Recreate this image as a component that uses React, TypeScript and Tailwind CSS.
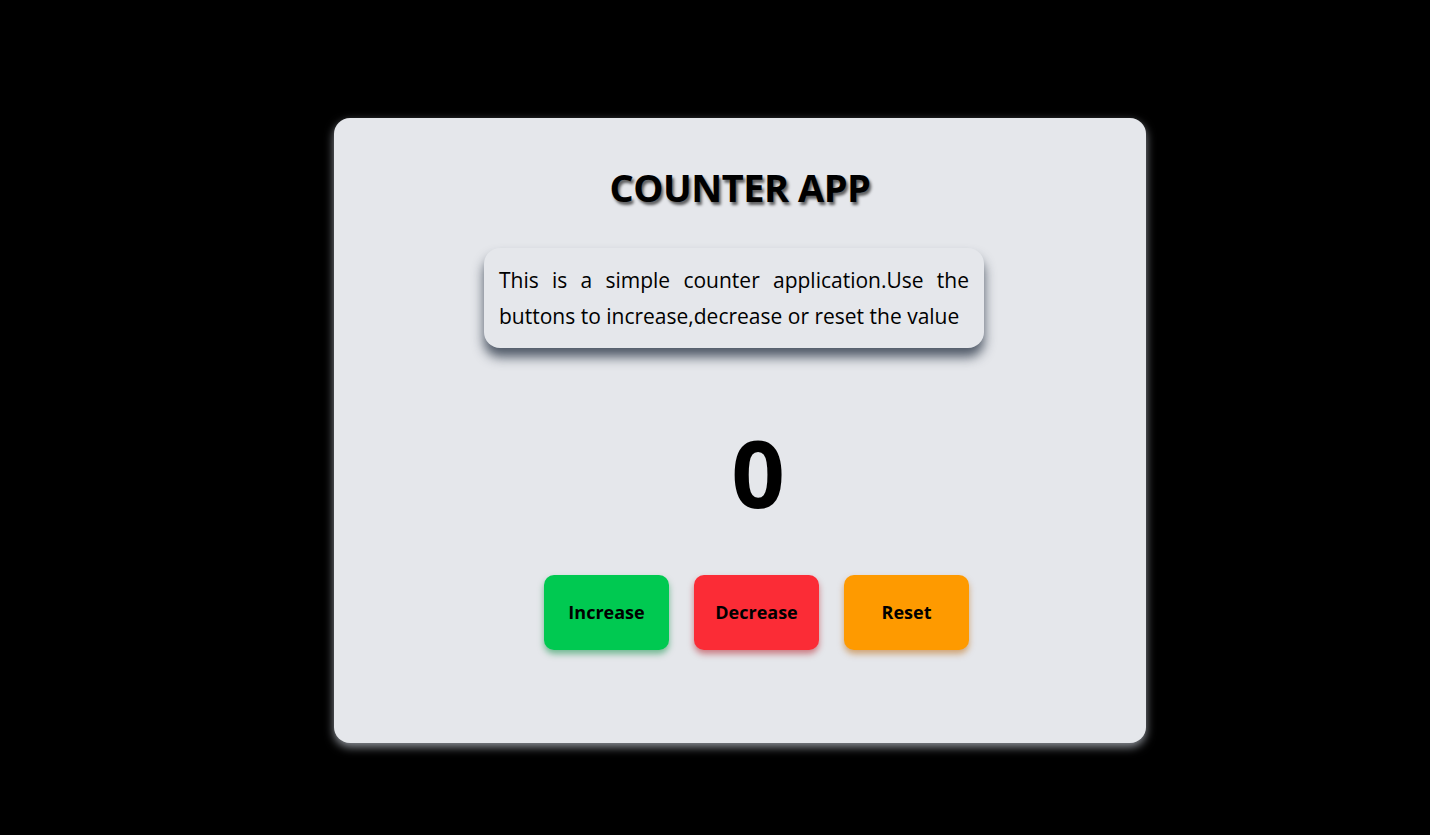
const App = () => {
  return (
    <div className="min-h-screen bg-black flex justify-center pt-[118px] pl-[50px] font-['Open_Sans','Noto_Sans',sans-serif] text-black">
      <div className="w-[812px] h-[625px] bg-gray-200 rounded-2xl shadow-[0_4px_10px_rgba(200,205,215,0.7)] flex flex-col items-center pt-[45px]">
        <h1 className="text-[38px] leading-[48px] font-bold tracking-[-0.5px] [text-shadow:2px_3px_3px_rgba(0,0,0,0.6)]">
          COUNTER APP
        </h1>

        <p className="mt-[37px] mr-[12px] w-[500px] px-[15px] py-[14px] rounded-2xl bg-gray-200 text-[21px] leading-[36px] text-justify shadow-[0_9px_12px_rgba(30,41,59,0.75)]">
          This is a simple counter application.Use the buttons to increase,decrease or reset the value
        </p>

        <div className="mt-[77px] ml-[36px] text-[94px] leading-none font-bold">0</div>

        <div className="mt-[56px] ml-[33px] flex gap-[25px]">
          <button className="w-[125px] h-[75px] rounded-[10px] bg-green-500 text-[18px] font-bold shadow-[0_4px_6px_rgba(0,140,60,0.5)]">
            Increase
          </button>
          <button className="w-[125px] h-[75px] rounded-[10px] bg-red-500 text-[18px] font-bold shadow-[0_4px_6px_rgba(180,20,30,0.5)]">
            Decrease
          </button>
          <button className="w-[125px] h-[75px] rounded-[10px] bg-amber-500 text-[18px] font-bold shadow-[0_4px_6px_rgba(190,100,0,0.5)]">
            Reset
          </button>
        </div>
      </div>
    </div>
  )
}

export default App
